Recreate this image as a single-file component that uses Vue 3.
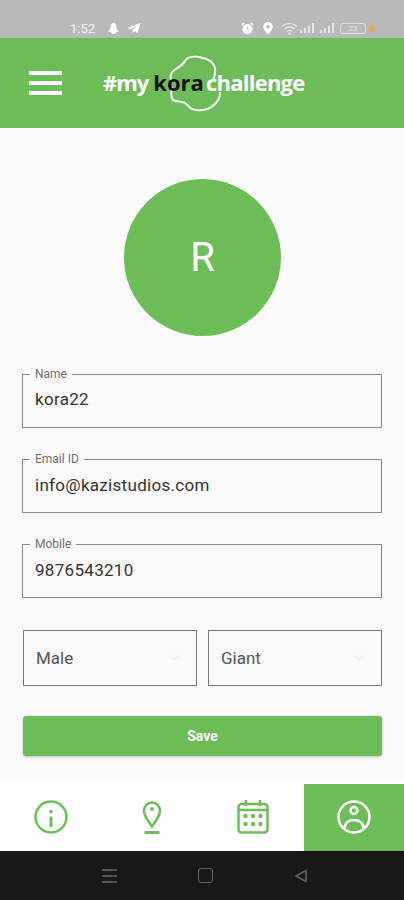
<script setup>
const tabs = ['info', 'pin', 'cal', 'user']
const dots = [[0,0],[1,0],[2,0],[0,1],[1,1],[2,1]]
</script>

<template>
  <div class="page">
    <div class="status">
      <span class="time">1:52</span>
      <svg class="ic-bell" width="13" height="13" viewBox="0 0 13 13"><path d="M6.5 1C4.2 1 3.6 3 3.6 5.5 3.6 7.5 2 8.5 1 9.5l3 .7c.5 1.5 1.5 1.8 2.5 1.8s2-.3 2.5-1.8l3-.7c-1-1-2.600-2-2.600-4C9.400 3 8.800 1 6.500 1z" fill="#fff"/></svg>
      <svg class="ic-plane" width="14" height="12" viewBox="0 0 14 12"><path d="M13.500 1 .5 6l3.500 1.200L10 3.500 5.500 8v3l2-2 3 2z" fill="#fff"/></svg>
      <span class="grow"></span>
      <svg width="13" height="13" viewBox="0 0 13 13"><circle cx="6.500" cy="7" r="5" fill="#fff"/><path d="M1 3 3 1M12 3l-2-2" stroke="#fff" stroke-width="1.500"/><path d="M6.500 4.500V7l1.500 1" stroke="#bbb" fill="none"/></svg>
      <svg class="ic-pin" width="12" height="14" viewBox="0 0 12 14"><path fill-rule="evenodd" d="M6 1a4.800 4.800 0 0 0-4.800 4.800C1.200 9 6 13.500 6 13.500s4.800-4.500 4.800-7.700A4.800 4.800 0 0 0 6 1zm0 3a1.800 1.800 0 1 1 0 3.600A1.800 1.800 0 0 1 6 4z" fill="#fff"/></svg>
      <svg class="ic-wifi" width="18" height="13" viewBox="0 0 18 13" fill="none" stroke="#e6e6e6" stroke-width="1.200"><path d="M1 4.500c4.500-4 10.500-4 15 0M3.500 7c3-2.500 7-2.500 10 0M6 9.500c1.500-1.200 3.500-1.200 5 0"/><circle cx="8.500" cy="11.500" r=".6"/></svg>
      <svg width="17" height="10" viewBox="0 0 17 10" fill="#e6e6e6"><rect x="1" y="7" width="2" height="3"/><rect x="5" y="5" width="2" height="5"/><rect x="9" y="3" width="2" height="7"/><rect x="13" y="0" width="2" height="10"/></svg>
      <svg class="ic-sig" width="17" height="10" viewBox="0 0 17 10" fill="#e6e6e6"><rect x="1" y="7" width="2" height="3"/><rect x="5" y="5" width="2" height="5"/><rect x="9" y="3" width="2" height="7"/><rect x="13" y="0" width="2" height="10"/></svg>
      <span class="batt">23</span>
      <svg class="ic-dot" width="6" height="11" viewBox="0 0 7 11"><path d="M3.500 0 7 5.500 3.500 11 0 5.500z" fill="#f0a640"/></svg>
      <span class="rest"></span>
    </div>

    <header class="bar">
      <div class="burger"><i></i><i></i><i></i></div>
      <div class="logo">
        <svg class="blob" width="54" height="57" viewBox="0 0 54 57" fill="none" stroke="#fff" stroke-width="2" stroke-linecap="round"><path d="M4 27C1 20 3 17 8 14 12 11 15 10 17 6 20 1 28 1 35 3 44 5 48 11 47 17 47 20 46 23 45 25"/><path d="M4 33C3 38 3 43 5 45 9 47 13 46 17 48 20 50 22 55 28 55 36 56 43 53 47 49 50 46 52 42 52 38"/></svg>
        <span class="l-w">#my</span><span class="l-k">kora</span><span class="l-c">challenge</span>
      </div>
    </header>

    <main class="content">
      <div class="avatar">R</div>

      <div class="field f1">
        <span class="label">Name</span>
        <span class="value">kora22</span>
      </div>
      <div class="field">
        <span class="label">Email ID</span>
        <span class="value">info@kazistudios.com</span>
      </div>
      <div class="field f3">
        <span class="label">Mobile</span>
        <span class="value">9876543210</span>
      </div>

      <div class="selects">
        <div class="select">Male<svg width="12" height="8" viewBox="0 0 12 8" fill="none" stroke="#f1f1f1" stroke-width="1.500"><path d="M1 1l5 5 5-5"/></svg></div>
        <div class="select">Giant<svg width="12" height="8" viewBox="0 0 12 8" fill="none" stroke="#f1f1f1" stroke-width="1.500"><path d="M1 1l5 5 5-5"/></svg></div>
      </div>

      <button class="save">Save</button>
    </main>

    <nav class="tabs">
      <div v-for="t in tabs" :key="t" class="tab" :class="{ active: t === 'user' }">
        <svg v-if="t === 'info'" width="36" height="36" viewBox="0 0 36 36" fill="none" stroke="#6cbd58" stroke-width="2.500"><circle cx="18" cy="18" r="15.500"/><path d="M18 17.500v10.500" stroke-width="3"/><circle cx="18" cy="12.500" r="1.800" fill="#6cbd58" stroke="none"/></svg>
        <svg v-else-if="t === 'pin'" width="36" height="36" viewBox="0 0 36 36" fill="none" stroke="#6cbd58" stroke-width="2.500"><path d="M18 27.500c-3-5-8-9.500-8-16a8 8 0 0 1 16 0c0 6.500-5 11-8 16z"/><circle cx="18" cy="10" r="2" fill="#6cbd58" stroke="none"/><path d="M10.500 33.500h15" stroke-width="3"/></svg>
        <svg v-else-if="t === 'cal'" width="36" height="36" viewBox="0 0 36 36" fill="none" stroke="#6cbd58" stroke-width="2.500"><rect x="3.500" y="5" width="29" height="28.500" rx="3"/><path d="M3.500 11h29M11 1V7M25 1V7"/><circle v-for="d in dots" :key="d.join()" :cx="10.500 + d[0] * 7.500" :cy="17 + d[1] * 8" r="2.200" fill="#6cbd58" stroke="none"/></svg>
        <svg v-else width="36" height="36" viewBox="0 0 36 36" fill="none" stroke="#fff" stroke-width="2.500"><circle cx="18" cy="18" r="15.500"/><circle cx="18" cy="11.500" r="3.500"/><path d="M8 29.500C9 24 13 21 18 21s9 3 10 8.500"/></svg>
      </div>
    </nav>

    <footer class="sys">
      <div class="s-menu"><i></i><i></i><i></i></div>
      <div class="s-home"></div>
      <svg width="14" height="14" viewBox="0 0 14 14" fill="none" stroke="#666" stroke-width="1.500"><path d="M12 1.500v11L2 7z"/></svg>
    </footer>
  </div>
</template>

<style scoped>
.page {
  width: 404px;
  height: 900px;
  display: flex;
  flex-direction: column;
  background: #fafafa;
  font-family: Roboto, "Liberation Sans", sans-serif;
  overflow: hidden;
}
.status {
  height: 38px;
  box-sizing: border-box;
  padding: 18px 0 0 70px;
  background: #b9b9b9;
  display: flex;
  align-items: center;
  flex: none;
}
.time { color: #f1f1f1; font-size: 13px; }
.ic-bell { margin-left: 12px; }
.ic-plane { margin-left: 7px; }
.ic-pin { margin-left: 8px; }
.ic-wifi { margin-left: 7px; }
.ic-sig { margin-left: 3px; }
.ic-dot { margin-left: 3px; }
.grow { flex: 1; }
.batt {
  margin-left: 4px;
  width: 26px;
  height: 11px;
  box-sizing: border-box;
  border: 1px solid #e0e0e0;
  border-radius: 3px;
  color: #e6e6e6;
  font-size: 8px;
  line-height: 9px;
  text-align: center;
}
.rest { width: 29px; }
.bar {
  height: 90px;
  flex: none;
  background: #6cbd58;
  display: flex;
  align-items: center;
  padding-left: 29px;
  box-sizing: border-box;
}
.burger { width: 33px; display: flex; flex-direction: column; gap: 6px; }
.burger i { display: block; height: 4px; background: #fff; }
.logo {
  position: relative;
  margin: 0 0 2px 41px;
  display: flex;
  align-items: baseline;
  font-family: "Open Sans", Inter, sans-serif;
  font-size: 22px;
  font-weight: 700;
  line-height: 30px;
}
.blob { position: absolute; left: 65px; top: -12px; }
.l-w, .l-c { color: #fff; position: relative; }
.l-w { letter-spacing: -1px; }
.l-c { letter-spacing: -.75px; }
.l-k { color: #111; margin: 0 2px 0 5px; position: relative; }
.content {
  flex: 1;
  min-height: 0;
  padding: 51px 22px 0 23px;
  display: flex;
  flex-direction: column;
}
.avatar {
  align-self: center;
  width: 157px;
  height: 157px;
  border-radius: 50%;
  background: #6cbd58;
  color: #fff;
  font-size: 40px;
  display: flex;
  align-items: center;
  justify-content: center;
  margin-bottom: 38px;
}
.field {
  position: relative;
  height: 54px;
  box-sizing: border-box;
  border: 1px solid #8a8a8a;
  border-top-width: 1.500px;
  display: flex;
  align-items: flex-start;
  padding: 14px 12px 0;
  margin: 0 0 31px -1px;
}
.f1 { padding-top: 13px; }
.f3 { margin-bottom: 32px; }
.label {
  position: absolute;
  left: 7px;
  top: -8px;
  background: #fafafa;
  padding: 0 5px;
  font-size: 12px;
  line-height: 14px;
  color: #6f6f6f;
}
.value {
  font-size: 17px;
  line-height: 22px;
  color: #333;
  letter-spacing: .3px;
}
.selects { display: flex; gap: 11px; }
.select {
  flex: 1;
  height: 56px;
  box-sizing: border-box;
  border: 1px solid #777;
  font-size: 17px;
  padding: 0 16px 0 12px;
  color: #555;
  display: flex;
  align-items: center;
  justify-content: space-between;
}
.save {
  margin-top: 30px;
  height: 40px;
  border: none;
  border-radius: 3px;
  background: #6cbd58;
  color: #fff;
  font-family: inherit;
  font-size: 14px;
  font-weight: 700;
  box-shadow: 0 1px 3px rgba(0,0,0,.25);
}
.tabs {
  height: 69px;
  flex: none;
  background: #fff;
  display: grid;
  grid-template-columns: 101px 101px 102px 100px;
  box-sizing: border-box;
  padding-top: 2px;
}
.tab { display: flex; align-items: center; justify-content: center; padding-bottom: 1px; }
.tab.active { background: #6cbd58; }
.sys {
  height: 49px;
  flex: none;
  background: #181818;
  display: flex;
  align-items: center;
  padding-left: 102px;
  gap: 81px;
}
.s-menu { width: 15px; display: flex; flex-direction: column; gap: 4px; }
.s-menu i { display: block; height: 2px; background: #555; }
.s-home { width: 13px; height: 13px; border: 1.500px solid #666; border-radius: 3px; }
</style>
